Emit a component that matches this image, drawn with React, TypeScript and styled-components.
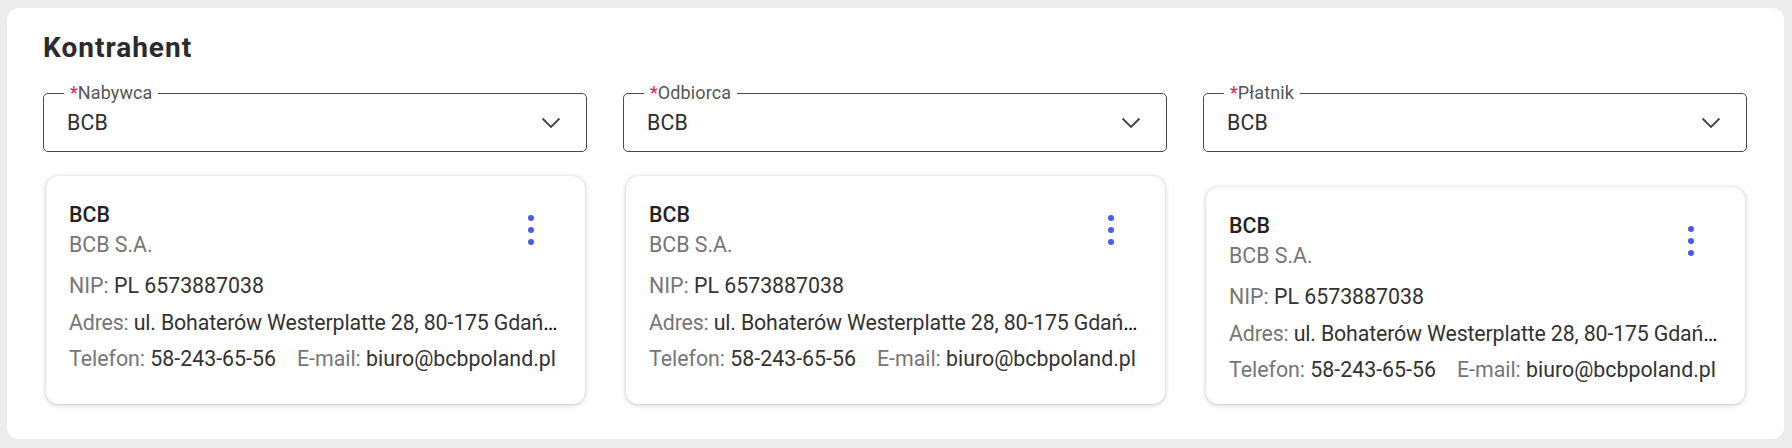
import React from 'react';
import styled, { createGlobalStyle } from 'styled-components';

type Party = {
  id: string;
  label: string;
  value: string;
  name: string;
  fullName: string;
  nip: string;
  address: string;
  phone: string;
  email: string;
};

const company = {
  value: 'BCB',
  name: 'BCB',
  fullName: 'BCB S.A.',
  nip: 'PL 6573887038',
  address: 'ul. Bohaterów Westerplatte 28, 80-175 Gdańsk',
  phone: '58-243-65-56',
  email: 'biuro@bcbpoland.pl'
};

const parties: Party[] = [
  { id: 'buyer', label: 'Nabywca', ...company },
  { id: 'receiver', label: 'Odbiorca', ...company },
  { id: 'payer', label: 'Płatnik', ...company }
];

const GlobalStyle = createGlobalStyle`
  html, body {
    margin: 0;
    padding: 0;
    background: #ececec;
  }
  body {
    font-family: Roboto, 'Liberation Sans', sans-serif;
  }
`;

const Page = styled.div`
  box-sizing: border-box;
  width: 1792px;
  padding: 8px 8px 9px 7px;
`;

const Panel = styled.section`
  box-sizing: border-box;
  background: #ffffff;
  border-radius: 12px;
  padding: 24px 37px 35px 36px;
`;

const Title = styled.h2`
  margin: 0;
  font-family: Roboto, sans-serif;
  font-weight: 700;
  font-size: 28px;
  letter-spacing: 1px;
  line-height: 32px;
  color: #2b2b2b;
`;

const Columns = styled.div`
  display: grid;
  grid-template-columns: repeat(3, minmax(0, 1fr));
  column-gap: 36px;
  margin-top: 29px;
`;

const Column = styled.div`
  min-width: 0;
  display: flex;
  flex-direction: column;
  gap: 24px;
`;

const SelectBox = styled.div`
  position: relative;
  box-sizing: border-box;
  height: 59px;
  border: 1px solid #4a4a4a;
  border-radius: 5px;
  display: flex;
  align-items: center;
  justify-content: space-between;
  padding: 0 25px 0 23px;
`;

const SelectLabel = styled.span`
  position: absolute;
  top: -9px;
  left: 20px;
  padding: 0 6px;
  background: #ffffff;
  font-size: 18px;
  letter-spacing: 0.1px;
  line-height: 16px;
  color: #555555;
`;

const Required = styled.span`
  color: #e0264a;
`;

const SelectValue = styled.span`
  font-size: 21.33px;
  letter-spacing: 0.2px;
  color: #2e2e2e;
`;

const Card = styled.div<{ $padBottom: number }>`
  box-sizing: border-box;
  margin: auto 2px 0 3px;
  background: #ffffff;
  border-radius: 12px;
  box-shadow: 0 1px 5px rgba(0, 0, 0, 0.22), 0 0 1px rgba(0, 0, 0, 0.18);
  padding: 24px 22px ${({ $padBottom }) => $padBottom}px 23px;
`;

const CardHeader = styled.div`
  display: flex;
  align-items: center;
  justify-content: space-between;
  margin-bottom: 8px;
`;

const CardName = styled.div`
  font-size: 21.33px;
  font-weight: 500;
  line-height: 30px;
  color: #222222;
`;

const CardFullName = styled.div`
  font-size: 21.33px;
  line-height: 30px;
  color: #767676;
`;

const MenuButton = styled.button`
  width: 48px;
  height: 48px;
  margin-right: 8px;
  border: none;
  background: transparent;
  padding: 0;
  display: flex;
  align-items: center;
  justify-content: center;
  cursor: pointer;
`;

const InfoRow = styled.div`
  display: flex;
  gap: 21px;
  font-size: 21.33px;
  line-height: 36.5px;
  white-space: nowrap;
  min-width: 0;
`;

const InfoItem = styled.span<{ $truncate?: boolean }>`
  min-width: 0;
  overflow: hidden;
  text-overflow: ${({ $truncate }) => ($truncate ? 'ellipsis' : 'clip')};
  letter-spacing: ${({ $truncate }) => ($truncate ? '-0.15px' : 'normal')};
`;

const InfoLabel = styled.span`
  color: #767676;
`;

const InfoValue = styled.span`
  color: #333333;
`;

const Chevron = () => (
  <svg width="20" height="12" viewBox="0 0 20 12" fill="none">
    <path d="M1.5 1.5 L10 10 L18.5 1.5" stroke="#444" strokeWidth="1.8" />
  </svg>
);

const MoreDots = () => (
  <svg width="6" height="30" viewBox="0 0 6 30">
    <circle cx="3" cy="3" r="3" fill="#4a5be6" />
    <circle cx="3" cy="15" r="3" fill="#4a5be6" />
    <circle cx="3" cy="27" r="3" fill="#4a5be6" />
  </svg>
);

const PartyColumn: React.FC<{ party: Party; padBottom: number }> = ({
  party,
  padBottom
}) => (
  <Column>
    <SelectBox>
      <SelectLabel>
        <Required>*</Required>
        {party.label}
      </SelectLabel>
      <SelectValue>{party.value}</SelectValue>
      <Chevron />
    </SelectBox>
    <Card $padBottom={padBottom}>
      <CardHeader>
        <div>
          <CardName>{party.name}</CardName>
          <CardFullName>{party.fullName}</CardFullName>
        </div>
        <MenuButton aria-label="menu">
          <MoreDots />
        </MenuButton>
      </CardHeader>
      <InfoRow>
        <InfoItem>
          <InfoLabel>NIP: </InfoLabel>
          <InfoValue>{party.nip}</InfoValue>
        </InfoItem>
      </InfoRow>
      <InfoRow>
        <InfoItem $truncate>
          <InfoLabel>Adres: </InfoLabel>
          <InfoValue>{party.address}</InfoValue>
        </InfoItem>
      </InfoRow>
      <InfoRow>
        <InfoItem>
          <InfoLabel>Telefon: </InfoLabel>
          <InfoValue>{party.phone}</InfoValue>
        </InfoItem>
        <InfoItem>
          <InfoLabel>E-mail: </InfoLabel>
          <InfoValue>{party.email}</InfoValue>
        </InfoItem>
      </InfoRow>
    </Card>
  </Column>
);

const App: React.FC = () => (
  <Page>
    <GlobalStyle />
    <Panel>
      <Title>Kontrahent</Title>
      <Columns>
        {parties.map((p, i) => (
          <PartyColumn key={p.id} party={p} padBottom={i === 2 ? 15 : 26} />
        ))}
      </Columns>
    </Panel>
  </Page>
);

export default App;
